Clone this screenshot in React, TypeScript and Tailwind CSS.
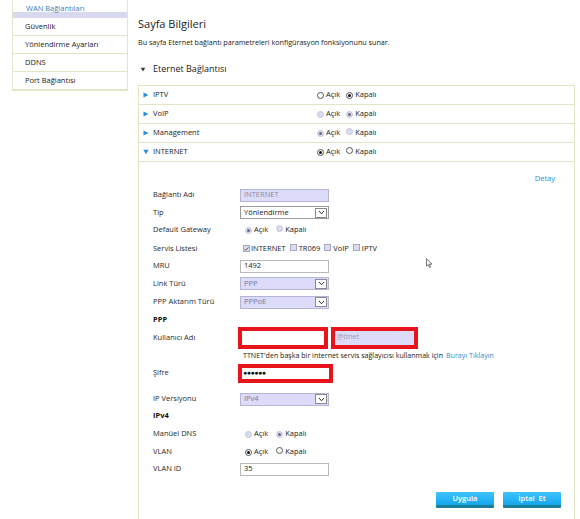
import React from "react";

const font = { fontFamily: '"Open Sans", "Noto Sans", Arial, sans-serif' };

const Radio: React.FC<{ checked?: boolean; disabled?: boolean }> = ({
  checked = false,
  disabled = false,
}) => (
  <span
    className={`inline-flex items-center justify-center w-[7px] h-[7px] rounded-full border ${
      disabled ? "bg-[#dcdcf0] border-[#c4c4dc]" : "bg-white border-[#555]"
    }`}
  >
    {checked && (
      <span
        className={`w-[3px] h-[3px] rounded-full ${
          disabled ? "bg-[#6a6a78]" : "bg-[#111]"
        }`}
      />
    )}
  </span>
);

const RadioPair: React.FC<{ on: boolean; disabled?: boolean; gap: string }> = ({
  on,
  disabled,
  gap,
}) => (
  <div className="flex items-center text-[7.5px] text-[#1a1a1a]">
    <Radio checked={on} disabled={disabled} />
    <span className="ml-[2px]">Açık</span>
    <span className={gap}>
      <Radio checked={!on} disabled={disabled} />
    </span>
    <span className="ml-[2px]">Kapalı</span>
  </div>
);

const Check: React.FC<{ checked?: boolean }> = ({ checked }) => (
  <span className="inline-flex items-center justify-center w-[7px] h-[7px] border border-[#a8a8c4] bg-[#dcdcf0]">
    {checked && (
      <svg viewBox="0 0 8 8" className="w-[6px] h-[6px]">
        <path d="M1 4 L3 6 L7 1.5" stroke="#333" strokeWidth="1.2" fill="none" />
      </svg>
    )}
  </span>
);

const Select: React.FC<{ value: string; disabled?: boolean }> = ({ value, disabled }) => (
  <div
    className={`flex items-center justify-between w-[89px] h-[13px] border pl-[3px] pr-[1px] ${
      disabled
        ? "bg-[#dcdcfa] border-[#b4b4d4] text-[#7a7a96]"
        : "bg-white border-[#9a9a9a] text-[#1a1a1a]"
    } text-[7.5px]`}
  >
    <span>{value}</span>
    <span className="flex items-center justify-center w-[12px] h-[10px] bg-white border border-[#8a8a8a]">
      <svg viewBox="0 0 10 8" className="w-[7px] h-[5px]">
        <path d="M1 1.5 L5 6 L9 1.5" stroke="#222" strokeWidth="1.5" fill="none" />
      </svg>
    </span>
  </div>
);

const Input: React.FC<{ value: string; disabled?: boolean; w?: string }> = ({
  value,
  disabled,
  w = "w-[89px]",
}) => (
  <div
    className={`flex items-center ${w} h-[13px] border pl-[3px] text-[7.5px] ${
      disabled
        ? "bg-[#dcdcfa] border-[#b4b4d4] text-[#8a8aa8]"
        : "bg-white border-[#b8b8b8] text-[#1a1a1a]"
    }`}
  >
    {value}
  </div>
);

const FormRow: React.FC<{ label: string; h: string; bold?: boolean; children?: React.ReactNode; extra?: string }> = ({
  label,
  h,
  bold,
  children,
  extra = "",
}) => (
  <div className={`flex items-center ${h} ${extra}`}>
    <div className={`w-[87px] text-[7.5px] ${bold ? "font-bold text-[#111]" : "text-[#2a2a2a]"}`}>
      {label}
    </div>
    {children}
  </div>
);

const RightTri = () => (
  <svg viewBox="0 0 6 6" className="w-[6px] h-[6px]">
    <path d="M0.5 0.5 L5.5 3 L0.5 5.5 Z" fill="#2c8fd6" />
  </svg>
);

const DownTri: React.FC<{ color?: string; size?: string }> = ({ color = "#2c8fd6", size = "w-[6px] h-[6px]" }) => (
  <svg viewBox="0 0 6 6" className={size}>
    <path d="M0.3 0.8 L5.7 0.8 L3 5.3 Z" fill={color} />
  </svg>
);

const services = [
  { name: "IPTV", on: false, disabled: false },
  { name: "VoIP", on: false, disabled: true },
  { name: "Management", on: true, disabled: true },
];

const menu = ["Güvenlik", "Yönlendirme Ayarları", "DDNS", "Port Bağlantısı"];

export default function App() {
  return (
    <div className="relative flex w-[580px] h-[519px] overflow-hidden bg-white" style={font}>
      {/* sidebar */}
      <div className="ml-[12px] w-[116px] self-start border-x border-b border-[#e2e6c6]">
        <div className="h-[12px] pl-[13px] flex items-end pb-[0px] text-[7.5px] leading-none text-[#2f7fc1]">
          WAN Bağlantıları
        </div>
        <div className="h-[6px] bg-[#d8d8f0]" />
        {menu.map((m) => (
          <div
            key={m}
            className="h-[18px] pl-[12px] flex items-center border-b border-[#e2e6c6] text-[7.5px] text-[#1a1a1a]"
          >
            {m}
          </div>
        ))}
      </div>

      {/* main */}
      <div className="ml-[10px] w-[437px] flex flex-col">
        <div className="mt-[17px] h-[14px] text-[11px] leading-[14px] text-[#1a1a1a]">Sayfa Bilgileri</div>
        <div className="mt-[6px] h-[10px] text-[7.2px] leading-[10px] text-[#1a1a1a]">
          Bu sayfa Eternet bağlantı parametreleri konfigürasyon fonksiyonunu sunar.
        </div>
        <div className="mt-[16px] h-[12px] flex items-center pl-[2px] text-[9px] text-[#1a1a1a]">
          <DownTri color="#333" size="w-[6px] h-[5px]" />
          <span className="ml-[7px]">Eternet Bağlantısı</span>
        </div>
        <div className="mt-[6px] h-[2px] w-[442px] bg-[#e4e4e4]" />

        <div className="mt-[4px] border border-[#e2e6c6]">
          {services.map((s) => (
            <div
              key={s.name}
              className="h-[19px] flex items-center border-b border-[#e2e6c6] pl-[4px]"
            >
              <RightTri />
              <span className="ml-[4px] w-[164px] text-[7.5px] text-[#1a1a1a]">{s.name}</span>
              <RadioPair on={s.on} disabled={s.disabled} gap="ml-[6px]" />
            </div>
          ))}
          <div className="h-[19px] flex items-center border-b border-[#e2e6c6] pl-[4px]">
            <DownTri />
            <span className="ml-[4px] w-[164px] text-[7.5px] text-[#1a1a1a]">INTERNET</span>
            <RadioPair on={true} gap="ml-[6px]" />
          </div>

          {/* expanded body */}
          <div className="pt-[9px] pl-[14px] pr-[19px] h-[400px]">
            <div className="h-[15px] flex items-center justify-end text-[7.5px] text-[#2a8fd0]">Detay</div>

            <FormRow label="Bağlantı Adı" h="h-[18px]">
              <Input value="INTERNET" disabled />
            </FormRow>
            <FormRow label="Tip" h="h-[17px]">
              <Select value="Yönlendirme" />
            </FormRow>
            <FormRow label="Default Gateway" h="h-[18px]">
              <div className="ml-[5px]">
                <RadioPair on={true} disabled gap="ml-[8px]" />
              </div>
            </FormRow>
            <FormRow label="Servis Listesi" h="h-[19px]">
              <div className="ml-[3px] flex items-center text-[7.5px] text-[#1a1a1a]">
                <Check checked />
                <span className="ml-[1px]">INTERNET</span>
                <span className="ml-[4px]"><Check /></span>
                <span className="ml-[2px]">TR069</span>
                <span className="ml-[4px]"><Check /></span>
                <span className="ml-[2px]">VoIP</span>
                <span className="ml-[4px]"><Check /></span>
                <span className="ml-[2px]">IPTV</span>
              </div>
            </FormRow>
            <FormRow label="MRU" h="h-[16px]">
              <Input value="1492" />
            </FormRow>
            <FormRow label="Link Türü" h="h-[19px]">
              <Select value="PPP" disabled />
            </FormRow>
            <FormRow label="PPP Aktarım Türü" h="h-[18px]">
              <Select value="PPPoE" disabled />
            </FormRow>
            <FormRow label="PPP" h="h-[18px]" bold />
            <FormRow label="Kullanıcı Adı" h="h-[17px]">
              <div className="-ml-[2px] flex items-center">
                <div className="w-[90px] h-[22px] border-[4px] border-[#e8141c] bg-white" />
                <div className="ml-[3px] w-[87px] h-[22px] border-[4px] border-[#e8141c] bg-[#dcdcfa] flex items-center pl-[2px] text-[7px] text-[#9a9ab4]">
                  @ttnet
                </div>
              </div>
            </FormRow>
            <div className="h-[18px] flex items-center pl-[90px] text-[7.1px] text-[#1a1a1a]">
              TTNET'den başka bir internet servis sağlayıcısı kullanmak için
              <span className="ml-[3px] text-[#2a8fd0]">Burayı Tıklayın</span>
            </div>
            <FormRow label="Şifre" h="h-[18px]">
              <div className="-ml-[2px] w-[95px] h-[19px] border-[4px] border-[#e8141c] bg-white flex items-center pl-[1px] text-[7px] tracking-[-0.5px] text-[#111]">
                ●●●●●●
              </div>
            </FormRow>
            <FormRow label="IP Versiyonu" h="h-[16px]" extra="mt-[9px]">
              <Select value="IPv4" disabled />
            </FormRow>
            <FormRow label="IPv4" h="h-[18px]" bold />
            <FormRow label="Manüel DNS" h="h-[18px]">
              <div className="ml-[5px]">
                <RadioPair on={false} disabled gap="ml-[8px]" />
              </div>
            </FormRow>
            <FormRow label="VLAN" h="h-[18px]">
              <div className="ml-[5px]">
                <RadioPair on={true} gap="ml-[8px]" />
              </div>
            </FormRow>
            <FormRow label="VLAN ID" h="h-[16px]">
              <Input value="35" />
            </FormRow>

            <div className="mt-[15px] flex justify-end gap-[9px] -mr-[6px]">
              {["Uygula", "İptal  Et"].map((b) => (
                <div
                  key={b}
                  className="w-[58px] h-[16px] flex flex-col rounded-[1px] overflow-hidden"
                >
                  <div className="flex-1 flex items-center justify-center bg-gradient-to-b from-[#3cc4ff] to-[#12a6ee] text-[7.5px] font-semibold text-white whitespace-pre">
                    {b}
                  </div>
                  <div className="h-[3px] bg-[#1a7e98]" />
                </div>
              ))}
            </div>
          </div>
        </div>
      </div>

      {/* mouse pointer */}
      <svg viewBox="0 0 8 12" className="absolute left-[426px] top-[258px] w-[7px] h-[11px]">
        <path d="M0.5 0.5 L0.5 9 L2.6 7.2 L4 10.5 L5.3 9.9 L3.9 6.7 L6.8 6.7 Z" fill="white" stroke="#333" strokeWidth="0.8" />
      </svg>
    </div>
  );
}
